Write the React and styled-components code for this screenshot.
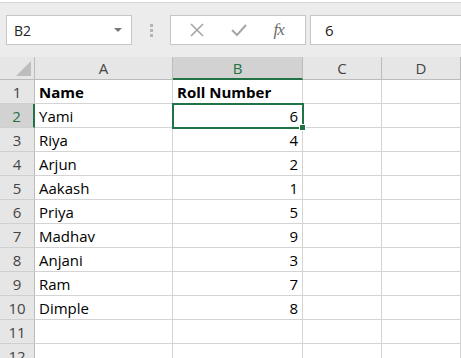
import React from 'react';
import styled, { createGlobalStyle } from 'styled-components';

const GlobalStyle = createGlobalStyle`
  html, body {
    margin: 0;
    padding: 0;
    width: 461px;
    height: 358px;
    overflow: hidden;
    background: #ffffff;
    font-family: "Open Sans", "Liberation Sans", sans-serif;
  }
`;

const EXCEL_GREEN = '#217346';

const Window = styled.div`
  width: 461px;
  height: 358px;
  display: flex;
  flex-direction: column;
  overflow: hidden;
`;

const Toolbar = styled.div`
  flex-shrink: 0;
  height: 55px;
  box-sizing: border-box;
  border-top: 1px solid #d6d6d6;
  margin-top: 2px;
  background: #ececec;
  display: flex;
  align-items: flex-start;
  padding: 12px 0 0 6px;
`;

const NameBox = styled.div`
  width: 126px;
  height: 30px;
  box-sizing: border-box;
  background: #fff;
  border: 1px solid #c6c6c6;
  display: flex;
  align-items: center;
  justify-content: space-between;
  padding: 0 9px 0 7px;
  font-size: 14px;
  color: #222;
`;

const Caret = styled.span`
  width: 0;
  height: 0;
  border-left: 4px solid transparent;
  border-right: 4px solid transparent;
  border-top: 4px solid #777;
`;

const Grip = styled.div`
  width: 38px;
  height: 30px;
  display: flex;
  flex-direction: column;
  align-items: center;
  justify-content: center;
  gap: 2px;

  span {
    width: 3px;
    height: 3px;
    background: #b5b5b5;
  }
`;

const ButtonGroup = styled.div`
  width: 136px;
  height: 30px;
  box-sizing: border-box;
  background: #fff;
  border: 1px solid #c6c6c6;
  display: flex;
  align-items: center;
  justify-content: space-around;
  padding: 0 8px 0 6px;
`;

const Fx = styled.span`
  font-family: "Liberation Serif", "DejaVu Serif", serif;
  font-style: italic;
  font-size: 17px;
  color: #6b6b6b;
  letter-spacing: -1px;
`;

const FormulaBox = styled.div`
  flex: 1;
  height: 30px;
  box-sizing: border-box;
  margin-left: 4px;
  background: #fff;
  border: 1px solid #c6c6c6;
  border-right: none;
  display: flex;
  align-items: center;
  padding-left: 14px;
  font-size: 15px;
  color: #222;
`;

const Sheet = styled.div`
  flex-shrink: 0;
  display: grid;
  grid-template-columns: 35px 138px 130px 79px 1fr;
  grid-template-rows: 23px;
  grid-auto-rows: 24px;
  font-size: 15px;
  color: #000;
`;

const HeaderCell = styled.div`
  box-sizing: border-box;
  background: ${p => (p.active ? '#d2d2d2' : '#e6e6e6')};
  color: ${p => (p.active ? EXCEL_GREEN : '#444')};
  border-right: 1px solid #bcbcbc;
  border-bottom: ${p => (p.active ? `2px solid ${EXCEL_GREEN}` : '1px solid #bcbcbc')};
  display: flex;
  align-items: center;
  justify-content: center;
  font-size: 15px;
  line-height: 1;
  padding-top: 1px;
`;

const Corner = styled(HeaderCell)`
  position: relative;

  &::after {
    content: '';
    position: absolute;
    right: 3px;
    bottom: 3px;
    width: 0;
    height: 0;
    border-left: 15px solid transparent;
    border-bottom: 15px solid #bdbdbd;
  }
`;

const RowHeader = styled.div`
  box-sizing: border-box;
  background: ${p => (p.active ? '#d2d2d2' : '#e6e6e6')};
  color: ${p => (p.active ? EXCEL_GREEN : '#444')};
  border-bottom: 1px solid #cfcfcf;
  border-right: ${p => (p.active ? `2px solid ${EXCEL_GREEN}` : '1px solid #bcbcbc')};
  display: flex;
  align-items: center;
  justify-content: center;
  font-size: 15px;
  padding-top: 1px;
`;

const Cell = styled.div`
  position: relative;
  box-sizing: border-box;
  border-right: 1px solid #d4d4d4;
  border-bottom: 1px solid #d4d4d4;
  display: flex;
  align-items: center;
  justify-content: ${p => (p.numeric ? 'flex-end' : 'flex-start')};
  padding: 1px 4px 0 4px;
  font-weight: ${p => (p.bold ? 700 : 400)};
  white-space: nowrap;
  outline: ${p => (p.selected ? `2px solid ${EXCEL_GREEN}` : 'none')};
  outline-offset: -1px;
  z-index: ${p => (p.selected ? 2 : 1)};

  ${p =>
    p.selected &&
    `
    &::after {
      content: '';
      position: absolute;
      right: -4px;
      bottom: -4px;
      width: 5px;
      height: 5px;
      background: ${EXCEL_GREEN};
      border: 1px solid #fff;
    }
  `}
`;

const columns = ['A', 'B', 'C', 'D'];

const rows = [
  ['Name', 'Roll Number'],
  ['Yami', 6],
  ['Riya', 4],
  ['Arjun', 2],
  ['Aakash', 1],
  ['Priya', 5],
  ['Madhav', 9],
  ['Anjani', 3],
  ['Ram', 7],
  ['Dimple', 8],
  ['', ''],
  ['', ''],
];

const CrossIcon = () => (
  <svg width="14" height="14" viewBox="0 0 14 14">
    <path d="M1 1 L13 13 M13 1 L1 13" stroke="#a6a6a6" strokeWidth="1.6" fill="none" />
  </svg>
);

const CheckIcon = () => (
  <svg width="16" height="14" viewBox="0 0 16 14">
    <path d="M1 7 L6 12 L15 2" stroke="#a6a6a6" strokeWidth="2" fill="none" />
  </svg>
);

export default function App() {
  return (
    <Window>
      <GlobalStyle />
      <Toolbar>
        <NameBox>
          B2
          <Caret />
        </NameBox>
        <Grip>
          <span />
          <span />
          <span />
        </Grip>
        <ButtonGroup>
          <CrossIcon />
          <CheckIcon />
          <Fx>fx</Fx>
        </ButtonGroup>
        <FormulaBox>6</FormulaBox>
      </Toolbar>
      <Sheet>
        <Corner />
        {columns.map(c => (
          <HeaderCell key={c} active={c === 'B'}>
            {c}
          </HeaderCell>
        ))}
        {rows.map((r, i) => (
          <React.Fragment key={i}>
            <RowHeader active={i === 1}>{i + 1}</RowHeader>
            <Cell bold={i === 0}>{r[0]}</Cell>
            <Cell bold={i === 0} numeric={i > 0} selected={i === 1}>
              {r[1]}
            </Cell>
            <Cell />
            <Cell />
          </React.Fragment>
        ))}
      </Sheet>
    </Window>
  );
}
